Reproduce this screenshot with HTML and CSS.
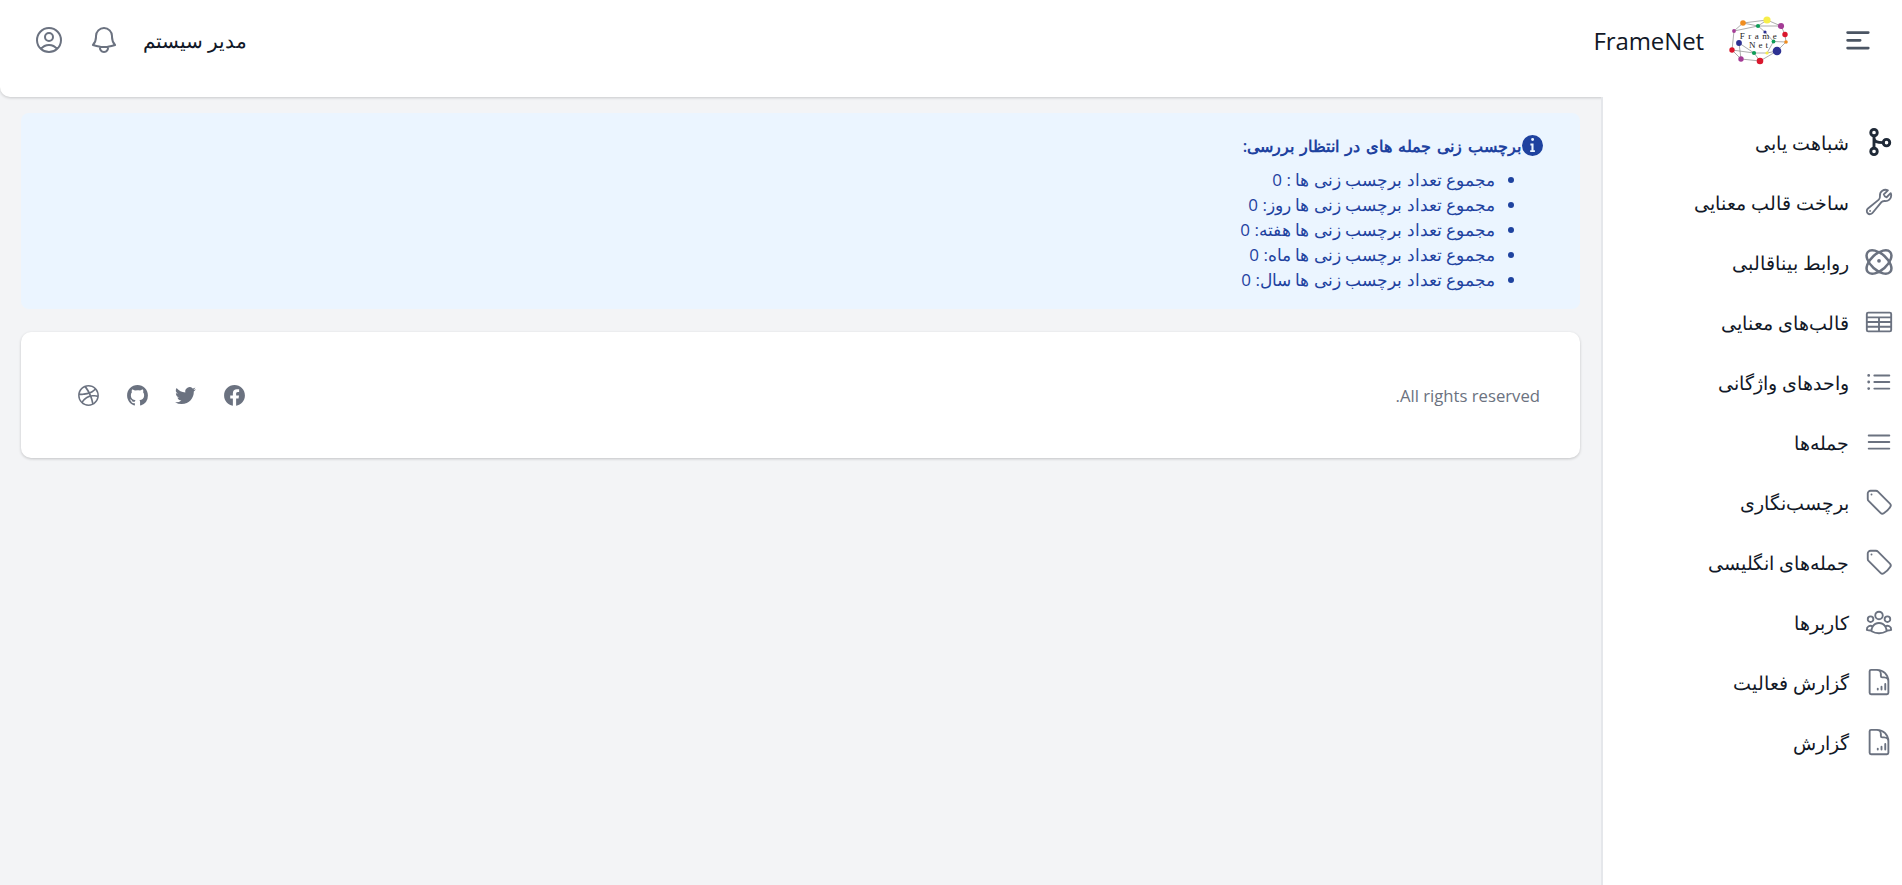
FILE: index.html
```html
<!DOCTYPE html>
<html lang="fa" dir="rtl">
<head>
    <meta charset="UTF-8">
    <meta name="viewport" content="width=device-width, initial-scale=1.0">
    <title>FrameNet</title>
    <link rel="stylesheet" href="styles.css">
</head>
<body>
    <header class="topbar">
        <div class="brand">
            <svg class="hamburger" viewBox="0 0 24 24" fill="none" stroke="currentColor" stroke-width="2.2" stroke-linecap="round"><path d="M4.5 6h16.500M4.5 12.200h10M4.5 18.400h16.500"/></svg>
            <svg class="logo" viewBox="15 5 70 55" stroke="#8a8a8a" stroke-width=".7" fill="none">
                <path d="M33 15L57 12L71 18L75 26.5L76 34L67 43L50 53L31 51L22 42L24 23L33 15M33 15L48 18L57 12M48 18L71 18M48 18L55 24L63.5 33.5L76 34M24 23L48 18M29 35L31 51M22 42L44 45L57 45L67 43M44 45L50 53M63.5 33.5L57 45M29 35L44 45"/>
                <g stroke="none">
                    <circle cx="57" cy="12" r="3.6" fill="#f7ee4a"/>
                    <circle cx="33" cy="15" r="2.8" fill="#f08c1e"/>
                    <circle cx="71" cy="18" r="3.100" fill="#a43c96"/>
                    <circle cx="48" cy="18" r="2.100" fill="#0f9d58"/>
                    <circle cx="24" cy="23" r="1.900" fill="#a43c96"/>
                    <circle cx="55" cy="24" r="1.600" fill="#2e3192"/>
                    <circle cx="75" cy="26.5" r="2.700" fill="#d9182d"/>
                    <circle cx="76" cy="34" r="1.800" fill="#f08c1e"/>
                    <circle cx="63.5" cy="33.5" r="1.900" fill="#0f9d58"/>
                    <circle cx="29" cy="35" r="2.900" fill="#2e3192"/>
                    <circle cx="67" cy="43" r="4.300" fill="#2e3192"/>
                    <circle cx="22" cy="42" r="2.700" fill="#d9182d"/>
                    <circle cx="44" cy="45" r="2.100" fill="#0f9d58"/>
                    <circle cx="57" cy="45" r="1.600" fill="#f7ee4a"/>
                    <circle cx="31" cy="51" r="2.700" fill="#a43c96"/>
                    <circle cx="50" cy="53" r="3.300" fill="#d9182d"/>
                    <text class="logo-text" x="50" y="31" text-anchor="middle" fill="#222" letter-spacing="3.500" direction="ltr">Frame</text>
                    <text class="logo-text" x="50" y="39.500" text-anchor="middle" fill="#222" letter-spacing="3" direction="ltr">Net</text>
                </g>
            </svg>
            <span class="brand-name">FrameNet</span>
        </div>
        <div class="user-box">
            <span class="user-name">مدیر سیستم</span>
            <svg class="top-icon" viewBox="0 0 24 24" fill="none" stroke="currentColor" stroke-width="1.5" stroke-linecap="round" stroke-linejoin="round"><path d="M14.857 17.082a23.848 23.848 0 005.454-1.31A8.967 8.967 0 0118 9.75v-.7V9A6 6 0 006 9v.75a8.967 8.967 0 01-2.312 6.022c1.733.64 3.56 1.085 5.455 1.31m5.714 0a24.255 24.255 0 01-5.714 0m5.714 0a3 3 0 11-5.714 0"/></svg>
            <svg class="top-icon" viewBox="0 0 24 24" fill="none" stroke="currentColor" stroke-width="1.5" stroke-linecap="round" stroke-linejoin="round"><path d="M17.982 18.725A7.488 7.488 0 0012 15.75a7.488 7.488 0 00-5.982 2.975m11.963 0a9 9 0 10-11.963 0m11.963 0A8.966 8.966 0 0112 21a8.966 8.966 0 01-5.982-2.275M15 9.75a3 3 0 11-6 0 3 3 0 016 0z"/></svg>
        </div>
    </header>

    <div class="page">
        <aside class="sidebar">
            <a class="nav-item">
                <svg class="nav-icon nav-icon-dark" viewBox="0 0 24 24" fill="none" stroke="currentColor" stroke-width="2.300" stroke-linecap="round"><circle cx="8" cy="4.500" r="2.600"/><circle cx="8" cy="19.500" r="2.600"/><circle cx="18" cy="12.500" r="2.600"/><path d="M8 7v10M8 8.500c0 3 2 4 7.500 4"/></svg>
                <span>شباهت یابی</span>
            </a>
            <a class="nav-item">
                <svg class="nav-icon" viewBox="0 0 24 24" fill="none" stroke="currentColor" stroke-width="1.5" stroke-linecap="round" stroke-linejoin="round"><path d="M21.75 6.75a4.5 4.5 0 01-4.884 4.484c-1.076-.091-2.264.071-2.95.904l-7.152 8.684a2.548 2.548 0 11-3.586-3.586l8.684-7.152c.833-.686.995-1.874.904-2.95a4.5 4.5 0 016.336-4.486l-3.276 3.276a3.004 3.004 0 002.25 2.25l3.276-3.276c.256.565.398 1.192.398 1.852z"/><path d="M4.867 19.125h.008v.008h-.008v-.008z"/></svg>
                <span>ساخت قالب معنایی</span>
            </a>
            <a class="nav-item">
                <svg class="nav-icon" viewBox="0 0 24 24" fill="none" stroke="currentColor" stroke-width="2"><ellipse cx="12" cy="12" rx="12" ry="6.500" transform="rotate(42 12 12)"/><ellipse cx="12" cy="12" rx="12" ry="6.500" transform="rotate(-42 12 12)"/><circle cx="12" cy="11" r="1.500" fill="currentColor" stroke="none"/></svg>
                <span>روابط بیناقالبی</span>
            </a>
            <a class="nav-item">
                <svg class="nav-icon" viewBox="0 0 24 24" fill="none" stroke="currentColor" stroke-width="1.5" stroke-linejoin="round"><rect x="2.250" y="4.500" width="19.500" height="15" rx="1.100"/><path d="M2.250 8.250h19.500M2.250 12h19.500M2.250 15.750h19.500M12 8.250V19.500"/></svg>
                <span>قالب‌های معنایی</span>
            </a>
            <a class="nav-item">
                <svg class="nav-icon" viewBox="0 0 24 24" fill="none" stroke="currentColor" stroke-width="1.5" stroke-linecap="round" stroke-linejoin="round"><path d="M8.250 6.750h12M8.250 12h12m-12 5.250h12M3.750 6.750h.007v.008H3.750V6.750zm.375 0a.375.375 0 11-.75 0 .375.375 0 01.75 0zM3.750 12h.007v.008H3.750V12zm.375 0a.375.375 0 11-.75 0 .375.375 0 01.75 0zm-.375 5.250h.007v.008H3.750v-.008zm.375 0a.375.375 0 11-.75 0 .375.375 0 01.75 0z"/></svg>
                <span>واحدهای واژگانی</span>
            </a>
            <a class="nav-item">
                <svg class="nav-icon" viewBox="0 0 24 24" fill="none" stroke="currentColor" stroke-width="1.5" stroke-linecap="round" stroke-linejoin="round"><path d="M3.750 6.750h16.500M3.750 12h16.500m-16.500 5.250h16.500"/></svg>
                <span>جمله‌ها</span>
            </a>
            <a class="nav-item">
                <svg class="nav-icon" viewBox="0 0 24 24" fill="none" stroke="currentColor" stroke-width="1.5" stroke-linecap="round" stroke-linejoin="round"><path d="M9.568 3H5.250A2.250 2.250 0 003 5.250v4.318c0 .597.237 1.170.659 1.591l9.581 9.581c.699.699 1.780.872 2.607.330a18.095 18.095 0 005.223-5.223c.542-.827.369-1.908-.330-2.607L11.160 3.660A2.250 2.250 0 009.568 3z"/><path d="M6 6h.008v.008H6V6z"/></svg>
                <span>برچسب‌نگاری</span>
            </a>
            <a class="nav-item">
                <svg class="nav-icon" viewBox="0 0 24 24" fill="none" stroke="currentColor" stroke-width="1.5" stroke-linecap="round" stroke-linejoin="round"><path d="M9.568 3H5.250A2.250 2.250 0 003 5.250v4.318c0 .597.237 1.170.659 1.591l9.581 9.581c.699.699 1.780.872 2.607.330a18.095 18.095 0 005.223-5.223c.542-.827.369-1.908-.330-2.607L11.160 3.660A2.250 2.250 0 009.568 3z"/><path d="M6 6h.008v.008H6V6z"/></svg>
                <span>جمله‌های انگلیسی</span>
            </a>
            <a class="nav-item">
                <svg class="nav-icon" viewBox="0 0 24 24" fill="none" stroke="currentColor" stroke-width="1.5" stroke-linecap="round" stroke-linejoin="round"><path d="M18 18.720a9.094 9.094 0 003.741-.479 3 3 0 00-4.682-2.720m.940 3.198l.001.031c0 .225-.012.447-.037.666A11.944 11.944 0 0112 21c-2.170 0-4.207-.576-5.963-1.584A6.062 6.062 0 016 18.719m12 0a5.971 5.971 0 00-.941-3.197m0 0A5.995 5.995 0 0012 12.750a5.995 5.995 0 00-5.058 2.772m0 0a3 3 0 00-4.681 2.720 8.986 8.986 0 003.740.477m.940-3.197a5.971 5.971 0 00-.940 3.197M15 6.750a3 3 0 11-6 0 3 3 0 016 0zm6 3a2.250 2.250 0 11-4.500 0 2.250 2.250 0 014.500 0zm-13.500 0a2.250 2.250 0 11-4.500 0 2.250 2.250 0 014.500 0z"/></svg>
                <span>کاربرها</span>
            </a>
            <a class="nav-item">
                <svg class="nav-icon" viewBox="0 0 24 24" fill="none" stroke="currentColor" stroke-width="1.5" stroke-linecap="round" stroke-linejoin="round"><path d="M19.500 14.250v-2.625a3.375 3.375 0 00-3.375-3.375h-1.500A1.125 1.125 0 0113.500 7.125v-1.500a3.375 3.375 0 00-3.375-3.375H8.250M11 17.250v.75m3-2.250v2.250m3-4.500v4.500M10.125 2.250H5.625c-.621 0-1.125.504-1.125 1.125v17.250c0 .621.504 1.125 1.125 1.125h12.750c.621 0 1.125-.504 1.125-1.125V11.250a9 9 0 00-9-9z"/></svg>
                <span>گزارش فعالیت</span>
            </a>
            <a class="nav-item">
                <svg class="nav-icon" viewBox="0 0 24 24" fill="none" stroke="currentColor" stroke-width="1.5" stroke-linecap="round" stroke-linejoin="round"><path d="M19.500 14.250v-2.625a3.375 3.375 0 00-3.375-3.375h-1.500A1.125 1.125 0 0113.500 7.125v-1.500a3.375 3.375 0 00-3.375-3.375H8.250M11 17.250v.75m3-2.250v2.250m3-4.500v4.500M10.125 2.250H5.625c-.621 0-1.125.504-1.125 1.125v17.250c0 .621.504 1.125 1.125 1.125h12.750c.621 0 1.125-.504 1.125-1.125V11.250a9 9 0 00-9-9z"/></svg>
                <span>گزارش</span>
            </a>
        </aside>

        <main class="content">
            <div class="alert">
                <div class="alert-title">
                    <svg class="alert-icon" viewBox="0 0 20 20" fill="currentColor"><path fill-rule="evenodd" d="M10 0a10 10 0 100 20 10 10 0 000-20zM8.700 4.300a1.400 1.400 0 112.800 0 1.400 1.400 0 01-2.800 0zM8 8.200h3v6.300h1.300v1.700H7.800v-1.700H9V9.900H8z"/></svg>
                    <span>برچسب زنی جمله های در انتظار بررسی:</span>
                </div>
                <ul class="alert-list">
                    <li>مجموع تعداد برچسب زنی ها : 0</li>
                    <li>مجموع تعداد برچسب زنی ها روز: 0</li>
                    <li>مجموع تعداد برچسب زنی ها هفته: 0</li>
                    <li>مجموع تعداد برچسب زنی ها ماه: 0</li>
                    <li>مجموع تعداد برچسب زنی ها سال: 0</li>
                </ul>
            </div>

            <footer class="footer">
                <span class="rights">All rights reserved.</span>
                <div class="socials">
                    <svg viewBox="0 0 24 24" fill="currentColor"><path d="M22 12c0-5.523-4.477-10-10-10S2 6.477 2 12c0 4.991 3.657 9.128 8.438 9.878v-6.987h-2.540V12h2.540V9.797c0-2.506 1.492-3.890 3.777-3.890 1.094 0 2.238.195 2.238.195v2.460h-1.260c-1.243 0-1.630.771-1.630 1.562V12h2.773l-.443 2.890h-2.330v6.988C18.343 21.128 22 16.991 22 12z"/></svg>
                    <svg viewBox="0 0 24 24" fill="currentColor"><path d="M8.290 20.251c7.547 0 11.675-6.253 11.675-11.675 0-.178 0-.355-.012-.530A8.348 8.348 0 0022 5.920a8.190 8.190 0 01-2.357.646 4.118 4.118 0 001.804-2.270 8.224 8.224 0 01-2.605.996 4.107 4.107 0 00-6.993 3.743 11.650 11.650 0 01-8.457-4.287 4.106 4.106 0 001.270 5.477A4.072 4.072 0 012.800 9.713v.052a4.105 4.105 0 003.292 4.022 4.095 4.095 0 01-1.853.070 4.108 4.108 0 003.834 2.850A8.233 8.233 0 012 18.407a11.616 11.616 0 006.290 1.840"/></svg>
                    <svg viewBox="0 0 24 24" fill="currentColor"><path d="M12 2C6.477 2 2 6.484 2 12.017c0 4.425 2.865 8.180 6.839 9.504.5.092.682-.217.682-.483 0-.237-.008-.868-.013-1.703-2.782.605-3.369-1.343-3.369-1.343-.454-1.158-1.110-1.466-1.110-1.466-.908-.620.069-.608.069-.608 1.003.070 1.531 1.032 1.531 1.032.892 1.530 2.341 1.088 2.910.832.092-.647.350-1.088.636-1.338-2.220-.253-4.555-1.113-4.555-4.951 0-1.093.390-1.988 1.029-2.688-.103-.253-.446-1.272.098-2.650 0 0 .840-.270 2.750 1.026A9.564 9.564 0 0112 6.844c.850.004 1.705.115 2.504.337 1.909-1.296 2.747-1.027 2.747-1.027.546 1.379.202 2.398.100 2.651.640.700 1.028 1.595 1.028 2.688 0 3.848-2.339 4.695-4.566 4.943.359.309.678.920.678 1.855 0 1.338-.012 2.419-.012 2.747 0 .268.180.580.688.482A10.019 10.019 0 0022 12.017C22 6.484 17.522 2 12 2z"/></svg>
                    <svg viewBox="0 0 24 24" fill="currentColor"><path fill-rule="evenodd" d="M12 2C6.480 2 2 6.480 2 12s4.480 10 10 10c5.510 0 10-4.480 10-10S17.510 2 12 2zm6.605 4.610a8.502 8.502 0 011.930 5.314c-.281-.054-3.101-.629-5.943-.271-.065-.141-.120-.293-.184-.445a25.416 25.416 0 00-.564-1.236c3.145-1.280 4.577-3.124 4.761-3.362zM12 3.475c2.170 0 4.154.813 5.662 2.148-.152.216-1.443 1.941-4.480 3.080-1.399-2.570-2.950-4.675-3.189-5A8.687 8.687 0 0112 3.475zm-3.633.803a53.896 53.896 0 013.167 4.935c-3.992 1.063-7.517 1.040-7.896 1.040a8.581 8.581 0 014.729-5.975zM3.453 12.010v-.260c.370.010 4.512.065 8.775-1.215.250.477.477.965.694 1.453-.109.033-.228.065-.336.098-4.404 1.420-6.747 5.303-6.942 5.629a8.522 8.522 0 01-2.190-5.705zM12 20.547a8.482 8.482 0 01-5.239-1.800c.152-.315 1.888-3.656 6.703-5.337.022-.010.033-.010.054-.022a35.318 35.318 0 011.823 6.475 8.400 8.400 0 01-3.341.684zm4.761-1.465c-.086-.520-.542-3.015-1.659-6.084 2.679-.423 5.022.271 5.314.369a8.468 8.468 0 01-3.655 5.715z" clip-rule="evenodd"/></svg>
                </div>
            </footer>
        </main>
    </div>
</body>
</html>
```

FILE: styles.css
```css
* {
    box-sizing: border-box;
}
body {
    margin: 0;
    height: 885px;
    overflow: hidden;
    background-color: #f3f4f6;
    color: #111827;
    font-family: "Open Sans", "Noto Sans", sans-serif;
    font-size: 16px;
}
.topbar {
    height: 97px;
    display: flex;
    justify-content: space-between;
    align-items: center;
    padding: 0 30px 17px 33px;
    background-color: white;
    border-bottom-left-radius: 10px;
    box-shadow: 0 1px 3px rgba(0,0,0,0.18);
    position: relative;
}
.brand {
    display: flex;
    align-items: center;
}
.hamburger {
    width: 30px;
    height: 30px;
    color: #4b5563;
    margin-left: 47px;
}
.logo {
    width: 70px;
    height: 55px;
    margin-left: 21px;
}
.logo-text {
    font-family: "Liberation Serif", serif;
    font-size: 9px;
}
.brand-name {
    font-size: 24px;
    letter-spacing: -0.1px;
}
.user-box {
    display: flex;
    align-items: center;
    gap: 23px;
}
.user-name {
    font-size: 19.5px;
}
.top-icon {
    width: 32px;
    height: 32px;
    color: #6b7280;
}
.page {
    display: flex;
    height: 788px;
}
.sidebar {
    width: 301px;
    flex-shrink: 0;
    padding: 15px 8px 0 0;
    background-color: white;
    border-left: 2px solid #e5e7eb;
    position: relative;
}
.nav-item {
    height: 60px;
    display: flex;
    align-items: center;
    gap: 15px;
    font-size: 19.3px;
}
.nav-icon {
    width: 30px;
    height: 30px;
    flex-shrink: 0;
    color: #6b7280;
}
.nav-icon-dark {
    color: #1f2937;
}
.content {
    flex: 1;
    padding: 16px 21px 0 21px;
}
.alert {
    height: 196px;
    padding: 20px 37px 0 0;
    background-color: #ebf5ff;
    border-radius: 8px;
    color: #1e429f;
}
.alert-title {
    display: flex;
    align-items: center;
    gap: 1px;
    font-size: 16.4px;
    font-weight: 600;
    line-height: 25px;
    word-spacing: 1.7px;
}
.alert-icon {
    width: 21px;
    height: 21px;
}
.alert-list {
    margin: 9px 0 0 0;
    padding: 0 48px 0 0;
    font-size: 17px;
    line-height: 25px;
}
.footer {
    height: 126px;
    margin-top: 23px;
    padding: 0 40px 0 55px;
    display: flex;
    justify-content: space-between;
    align-items: center;
    background-color: white;
    border-radius: 10px;
    box-shadow: 0 1px 3px rgba(0,0,0,0.2);
}
.rights {
    color: #6b7280;
    font-size: 16.7px;
}
.socials {
    display: flex;
    gap: 23.5px;
    color: #6b7280;
}
.socials svg {
    width: 25px;
    height: 25px;
}
```
